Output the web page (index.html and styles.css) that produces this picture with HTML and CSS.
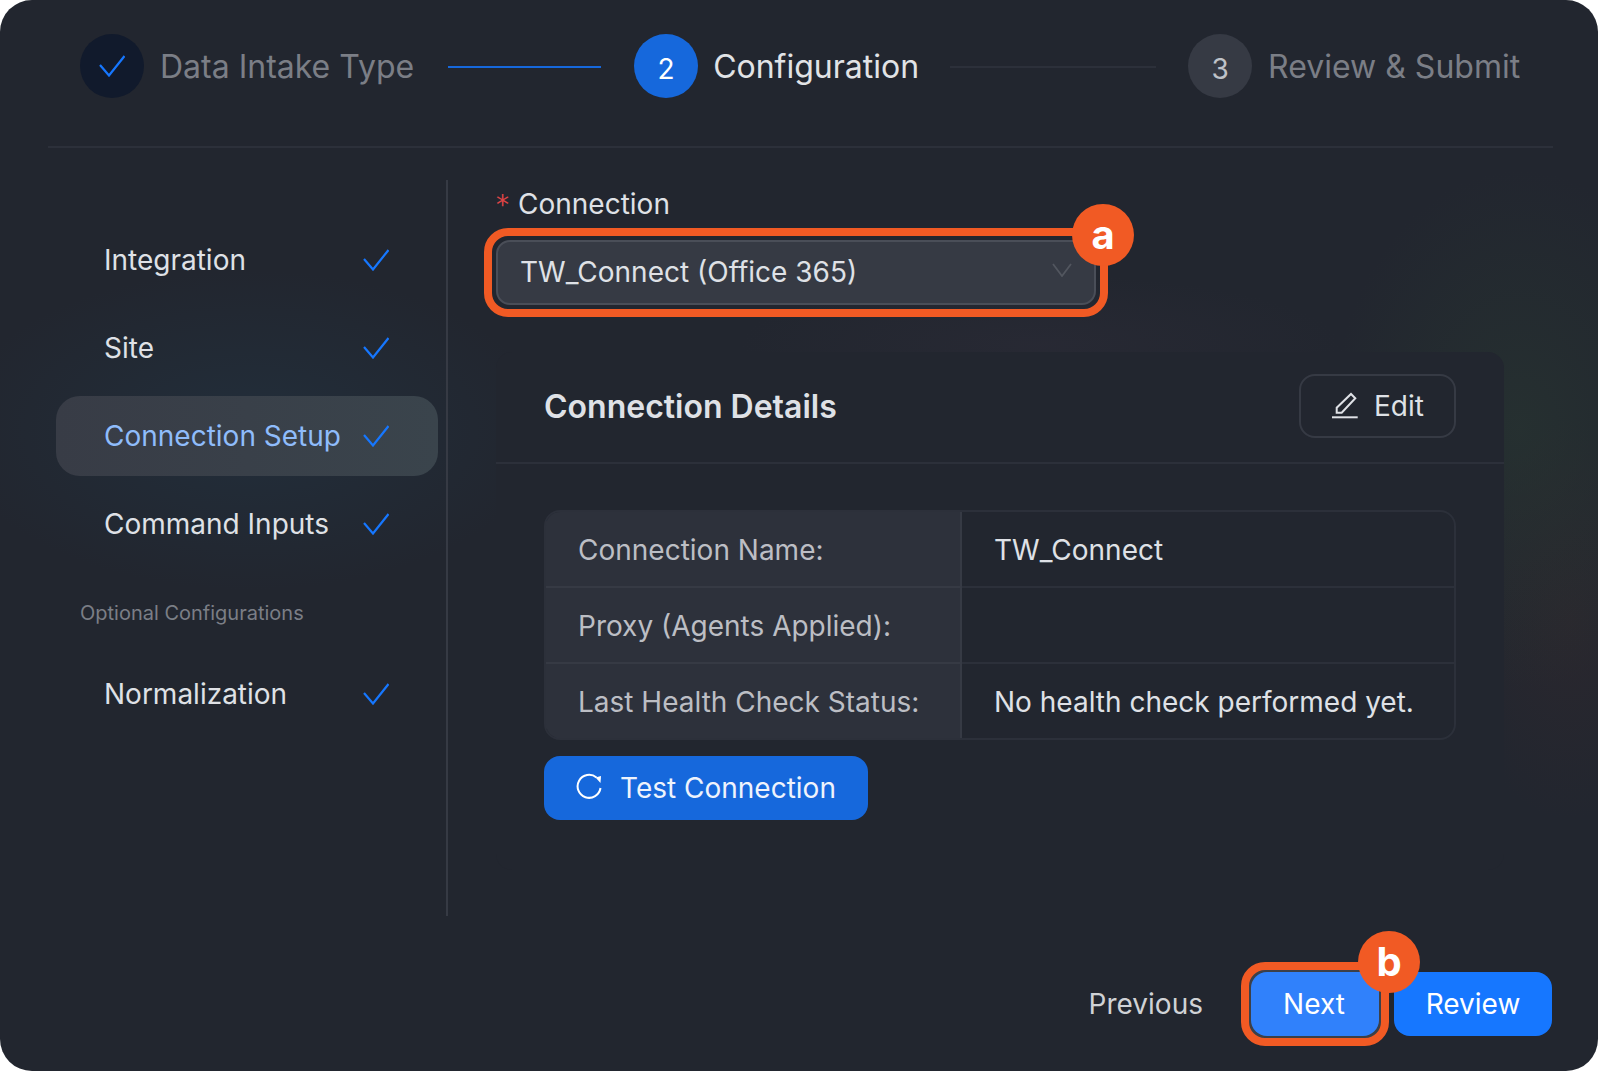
FILE: index.html
```html
<!DOCTYPE html>
<html lang="en">
<head>
<meta charset="utf-8">
<title>Configuration</title>
<link rel="stylesheet" href="styles.css">
</head>
<body>
<div class="card">
  <header class="stepper">
    <div class="step done">
      <span class="dot dot-icon"><svg class="chk" viewBox="0 0 26 22"><path d="M1 10 L10 20.5 L25.5 1"/></svg></span>
      <span class="step-label">Data Intake Type</span>
    </div>
    <span class="link link-a"></span>
    <div class="step current">
      <span class="dot">2</span>
      <span class="step-label">Configuration</span>
    </div>
    <span class="link link-b"></span>
    <div class="step todo">
      <span class="dot">3</span>
      <span class="step-label">Review &amp; Submit</span>
    </div>
  </header>
  <div class="main">
    <nav class="side">
      <div class="nav-item"><span>Integration</span><svg class="chk" viewBox="0 0 26 22"><path d="M1 10 L10 20.5 L25.5 1"/></svg></div>
      <div class="nav-item"><span>Site</span><svg class="chk" viewBox="0 0 26 22"><path d="M1 10 L10 20.5 L25.5 1"/></svg></div>
      <div class="nav-item active"><span>Connection Setup</span><svg class="chk" viewBox="0 0 26 22"><path d="M1 10 L10 20.5 L25.5 1"/></svg></div>
      <div class="nav-item"><span>Command Inputs</span><svg class="chk" viewBox="0 0 26 22"><path d="M1 10 L10 20.5 L25.5 1"/></svg></div>
      <div class="nav-head">Optional Configurations</div>
      <div class="nav-item"><span>Normalization</span><svg class="chk" viewBox="0 0 26 22"><path d="M1 10 L10 20.5 L25.5 1"/></svg></div>
    </nav>
    <section class="content">
      <label class="field-label"><span class="req">*</span>Connection</label>
      <div class="select-wrap">
        <div class="select">
          <span>TW_Connect (Office 365)</span>
          <svg class="caret" viewBox="0 0 20 14"><path d="M1 1 L10 13 L19 1"/></svg>
        </div>
        <span class="badge badge-a">a</span>
      </div>
      <div class="panel">
        <div class="panel-head">
          <h2>Connection Details</h2>
          <button class="edit">
            <svg class="pen" viewBox="0 0 28 28"><path d="M5.7 20.7 V15.7 L20 2 L24.3 6.3 L10.7 20.7 Z"/><path d="M1 25.3 H26.7"/></svg>
            Edit
          </button>
        </div>
        <div class="panel-body">
          <div class="table">
            <div class="row"><div class="key">Connection Name:</div><div class="val">TW_Connect</div></div>
            <div class="row"><div class="key">Proxy (Agents Applied):</div><div class="val"></div></div>
            <div class="row"><div class="key">Last Health Check Status:</div><div class="val">No health check performed yet.</div></div>
          </div>
          <button class="test">
            <svg class="spin" viewBox="0 0 26 26"><path d="M20.5 4.5 A11.5 11.5 0 1 0 24.5 15"/><path class="fill" d="M19.5 4.5 L25 3 L24.5 10 Z"/></svg>
            Test Connection
          </button>
        </div>
      </div>
    </section>
  </div>
  <footer class="foot">
    <span class="prev">Previous</span>
    <div class="next-wrap">
      <button class="btn next">Next</button>
      <span class="badge badge-b">b</span>
    </div>
    <button class="btn review">Review</button>
  </footer>
</div>
</body>
</html>
```
FILE: styles.css
```css
* { box-sizing: border-box; }
html, body { margin: 0; height: 100%; background: #fff; }
body { font-family: Inter, "Liberation Sans", sans-serif; color: #dfe1e6; }
button { font-family: inherit; border: 0; padding: 0; }

.card {
  width: 1598px; height: 1071px; background: #22262f; border-radius: 32px;
  padding: 34px 46px 35px 48px; display: flex; flex-direction: column; overflow: hidden; position: relative;
  background-image:
    radial-gradient(ellipse 190px 260px at 1520px 430px, rgba(42,60,50,.45), transparent 100%),
    radial-gradient(ellipse 300px 160px at 250px 430px, rgba(34,58,76,.4), transparent 100%),
    radial-gradient(ellipse 300px 70px at 1040px 345px, rgba(52,48,62,.3), transparent 100%),
    radial-gradient(ellipse 120px 200px at 1570px 620px, rgba(60,42,44,.3), transparent 100%);
}

.stepper { display: flex; align-items: center; height: 114px; padding: 0 32px 48px; border-bottom: 2px solid #2c303a; margin-right: -1px; }
.step { display: flex; align-items: center; gap: 16px; }
.current { gap: 15px; }
.dot { width: 64px; height: 64px; border-radius: 50%; display: flex; align-items: center; justify-content: center; font-size: 28px; padding-top: 5px; }
.dot-icon { padding-top: 0; }
.step-label { font-size: 32px; line-height: 64px; padding-top: 2px; }
.done .dot { background: #111a2c; }
.done .step-label, .todo .step-label { color: #7b7e86; }
.current .dot { background: #1668dc; color: #fff; }
.current .step-label { color: #e1e3e6; }
.todo .dot { background: #363a44; color: #bfc2c8; }
.link { height: 2px; flex: none; margin-top: 2px; }
.link-a { width: 153px; margin-left: 34px; margin-right: 33px; background: #1668dc; }
.link-b { width: 206px; margin-left: 31px; margin-right: 32px; background: #2c303a; }

.chk { width: 26px; height: 22px; fill: none; stroke: #1677ff; stroke-width: 2.2; flex: none; }
.main { display: flex; flex: 1; padding-top: 32px; min-height: 0; }
.side { width: 400px; height: 736px; border-right: 2px solid #363a44; padding: 40px 8px 0 8px; flex: none; margin-right: 48px; }
.nav-item { height: 80px; margin-bottom: 8px; padding: 0 49px 0 48px; display: flex; align-items: center; justify-content: space-between; font-size: 28px; border-radius: 24px; color: #dfe1e6; }
.nav-item.active { background: linear-gradient(90deg, #383c46, #3a444c); color: #8fbcfb; }
.nav-head { font-size: 20px; color: #7b7e86; padding: 0 24px; height: 36px; line-height: 36px; margin: 31px 0 23px; }

.content { flex: 1; min-width: 0; display: flex; flex-direction: column; }
.field-label { font-size: 28px; line-height: 40px; height: 44px; margin-top: 4px; color: #dfe1e6; }
.req { color: #dc4446; margin-right: 9px; font-family: "DejaVu Sans", sans-serif; font-size: 26px; }
.select-wrap { position: relative; width: 624px; height: 89px; margin: 0 0 35px -12px; border: 8px solid #f15a24; border-radius: 24px; padding: 4px; }
.select { height: 100%; background: #363a44; border: 2px solid #4a4e58; border-radius: 14px; display: flex; align-items: center; justify-content: space-between; padding: 0 22px 2px 22px; font-size: 28px; color: #dfe1e6; }
.caret { width: 20px; height: 14px; fill: none; stroke: #52565f; stroke-width: 1.8; margin-bottom: 4px; }
.badge { position: absolute; display: flex; align-items: center; justify-content: center; width: 62px; height: 62px; border-radius: 50%; background: #f15a24; color: #fff; font-weight: 700; font-size: 40px; line-height: 1; }
.badge-a { top: -32px; right: -34px; }
.badge-b { top: -39px; right: -39px; }

.panel { width: 1008px; height: 518px; border-radius: 16px; background: #22262f; position: relative; }
.panel-head { height: 112px; display: flex; align-items: center; justify-content: space-between; padding: 0 48px 2px; border-bottom: 2px solid #2c303a; }
h2 { margin: 0; font-size: 32px; font-weight: 600; color: #dfe1e6; }
.edit { width: 157px; height: 64px; background: transparent; border: 2px solid #363a44; border-radius: 16px; color: #dfe1e6; font-size: 28px; display: flex; align-items: center; justify-content: center; gap: 15px; }
.pen { width: 28px; height: 28px; fill: none; stroke: #dfe1e6; stroke-width: 2; }
.panel-body { padding: 46px 48px 0; }
.table { border: 2px solid #2c303a; border-radius: 16px; overflow: hidden; }
.row { display: grid; grid-template-columns: 416px 1fr; height: 76px; border-bottom: 2px solid #2c303a; font-size: 28px; }
.row:last-child { border-bottom: 0; height: 74px; }
.key { background: #2d313b; border-right: 2px solid #363a44; padding: 2px 32px 0; display: flex; align-items: center; color: #bcbec4; white-space: nowrap; box-shadow: 0 2px 0 #363a44; }
.val { padding: 2px 32px 0; display: flex; align-items: center; color: #dfe1e6; white-space: nowrap; }
.test { margin-top: 16px; width: 324px; height: 64px; border-radius: 16px; background: #1668dc; color: #eef3fc; font-size: 28px; display: flex; align-items: center; padding-left: 32px; gap: 18px; }
.spin { width: 26px; height: 26px; fill: none; stroke: #fff; stroke-width: 2; margin-bottom: 5px; }
.spin .fill { fill: #fff; stroke: none; }

.foot { display: flex; align-items: center; justify-content: flex-end; margin-top: auto; height: 64px; }
.prev { font-size: 28px; color: #d0d2d6; margin-right: 38px; }
.next-wrap { position: relative; border: 8px solid #f15a24; border-radius: 24px; padding: 2px; margin-right: 5px; background: #3c4048; }
.btn { display: block; height: 64px; border-radius: 16px; color: #fff; font-size: 28px; }
.next { width: 128px; background: #3081fb; padding-right: 2px; }
.review { width: 158px; background: #1677ff; }
```
